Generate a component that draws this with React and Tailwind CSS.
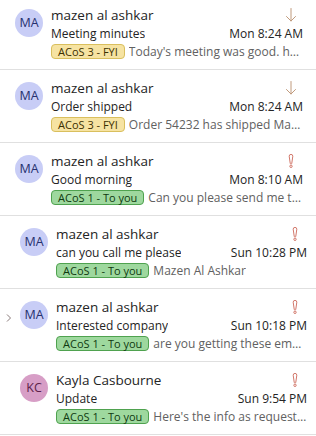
import React from "react";

const messages = [
  {
    initials: "MA",
    name: "mazen al ashkar",
    subject: "Meeting minutes",
    time: "Mon 8:24 AM",
    tag: "ACoS 3 - FYI",
    tone: "fyi",
    preview: "Today's meeting was good. here's the summary",
    importance: "low",
  },
  {
    initials: "MA",
    name: "mazen al ashkar",
    subject: "Order shipped",
    time: "Mon 8:24 AM",
    tag: "ACoS 3 - FYI",
    tone: "fyi",
    preview: "Order 54232 has shipped Mazen Al Ashkar",
    importance: "low",
  },
  {
    initials: "MA",
    name: "mazen al ashkar",
    subject: "Good morning",
    time: "Mon 8:10 AM",
    tag: "ACoS 1 - To you",
    tone: "you",
    preview: "Can you please send me the report",
    importance: "high",
  },
  {
    initials: "MA",
    name: "mazen al ashkar",
    subject: "can you call me please",
    time: "Sun 10:28 PM",
    tag: "ACoS 1 - To you",
    tone: "you",
    preview: "Mazen Al Ashkar",
    importance: "high",
    nested: true,
  },
  {
    initials: "MA",
    name: "mazen al ashkar",
    subject: "Interested company",
    time: "Sun 10:18 PM",
    tag: "ACoS 1 - To you",
    tone: "you",
    preview: "are you getting these emails from us",
    importance: "high",
    nested: true,
    chevron: true,
  },
  {
    initials: "KC",
    name: "Kayla Casbourne",
    subject: "Update",
    time: "Sun 9:54 PM",
    tag: "ACoS 1 - To you",
    tone: "you",
    preview: "Here's the info as requested by you",
    importance: "high",
    nested: true,
    pink: true,
  },
];

/** Low importance arrow */
const LowIcon = () => (
  <svg width="12" height="16" viewBox="0 0 12 16" fill="none">
    <path
      d="M6 1.5v12.5M1.5 9.5L6 14l4.5-4.5"
      stroke="#c09a7c"
      strokeWidth="1"
      strokeLinecap="round"
      strokeLinejoin="round"
    />
  </svg>
);

/** High importance mark */
const HighIcon = () => (
  <svg width="12" height="16" viewBox="0 0 12 16" fill="none">
    <path
      d="M4.2 3.2a1.8 1.8 0 0 1 3.6 0L6.8 10.2a0.8 0.8 0 0 1-1.6 0Z"
      stroke="#d2776a"
      strokeWidth="1"
      strokeLinejoin="round"
    />
    <circle cx="6" cy="13.3" r="1.2" stroke="#d2776a" strokeWidth="1" />
  </svg>
);

const Row = ({ m, first }) => (
  <div
    className={`relative flex h-[73px] border-b border-[#e0e0e0] pt-[8px] ${
      m.nested ? "pl-[20px] pr-[9px]" : "pl-[15px] pr-[13px]"
    } ${first ? "-mt-[3px]" : ""}`}
  >
    {m.chevron && (
      <svg
        className="absolute left-[6px] top-[24px]"
        width="6"
        height="10"
        viewBox="0 0 6 10"
        fill="none"
      >
        <path d="M1 1.5L4.5 5L1 8.5" stroke="#8a7a7a" strokeWidth="1" />
      </svg>
    )}
    <div
      className={`mt-[4px] flex h-[28px] w-[28px] shrink-0 items-center justify-center rounded-full text-[12.5px] ${
        m.pink ? "bg-[#d79ec6] text-[#5c1e4a]" : "bg-[#c8cdf6] text-[#26306e]"
      }`}
    >
      {m.initials}
    </div>
    <div className="ml-[8px] flex min-w-0 flex-1 flex-col">
      <div className="flex h-[20px] items-center justify-between">
        <span className="text-[13.5px] leading-[20px] text-[#242424]">{m.name}</span>
        <span className="mr-[6px] flex items-center">
          {m.importance === "low" ? <LowIcon /> : <HighIcon />}
        </span>
      </div>
      <div className="flex h-[17px] items-center justify-between text-[12px] leading-[17px] text-[#242424]">
        <span className="truncate">{m.subject}</span>
        <span className="ml-2 shrink-0">{m.time}</span>
      </div>
      <div className="mt-[2px] flex h-[15px] items-center">
        <span
          className={`shrink-0 rounded-[4px] border px-[6px] text-[11px] leading-[13px] ${
            m.tone === "fyi"
              ? "border-[#d9bf5e] bg-[#f6e3a2] text-[#3d3000]"
              : "border-[#4fa24f] bg-[#9ed89e] text-[#0f3a10]"
          }`}
        >
          {m.tag}
        </span>
        <span className="ml-[4px] truncate text-[12px] leading-[17px] text-[#616161]">
          {m.preview}
        </span>
      </div>
    </div>
  </div>
);

const App = () => {
  return (
    <div
      className="h-[436px] w-[316px] overflow-hidden bg-white"
      style={{ fontFamily: '"Open Sans", "Noto Sans", sans-serif' }}
    >
      {messages.map((m, i) => (
        <Row key={i} m={m} first={i === 0} />
      ))}
    </div>
  );
};

export default App;
